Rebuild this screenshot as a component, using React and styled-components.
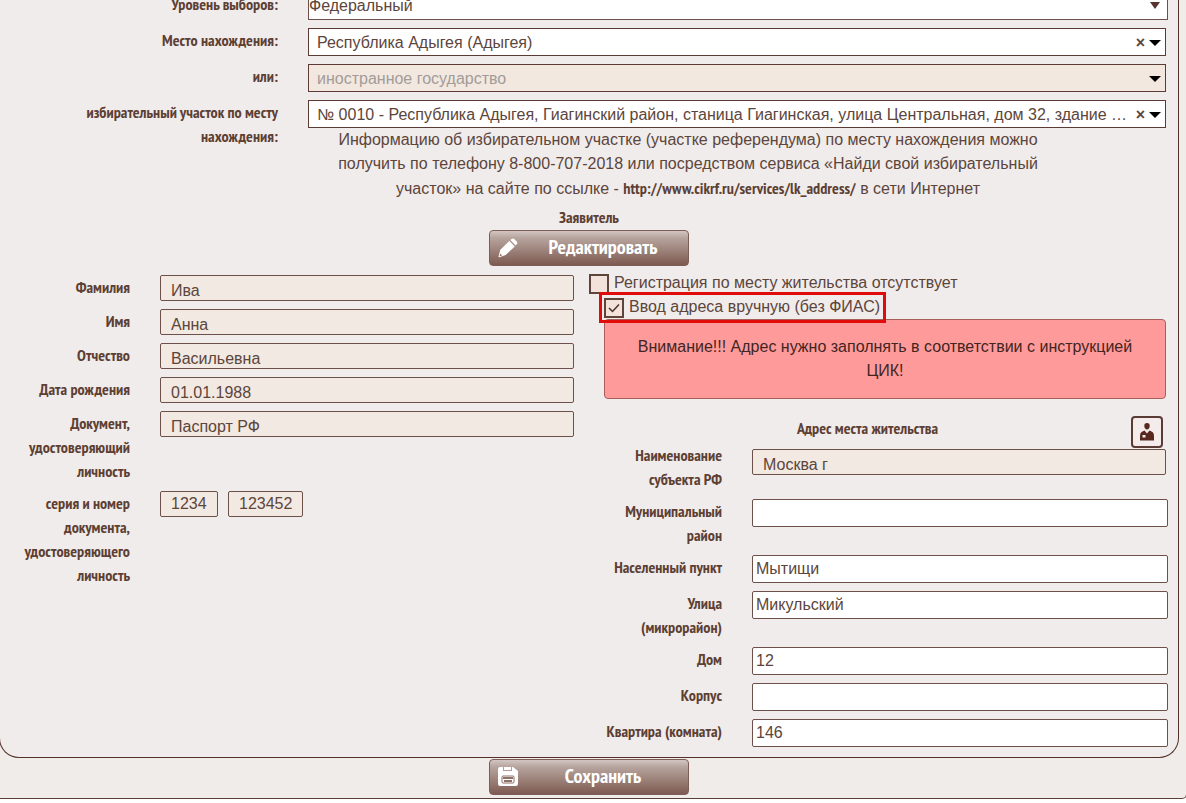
import React, { useState } from 'react';
import styled, { createGlobalStyle } from 'styled-components';

const narrow = '"PT Sans Narrow", "Liberation Sans Narrow", "Noto Sans", sans-serif';

const GlobalStyle = createGlobalStyle`
    * {
        box-sizing: border-box;
    }

    body {
        margin: 0;
        background: #fff;
        color: #5c453b;
        font: 16px/24px "Liberation Sans", Arial, sans-serif;
        overflow-x: hidden;
    }

    input, select, button {
        font: inherit;
        color: inherit;
    }
`;

const Sheet = styled.main`
    margin: -10px -1px 0 -1px;
    padding: 0 7px 3px 0;
    background: #f0ece9;
    border: 1px solid #5c3f37;
    border-radius: 0 0 5px 0;
    border-left: none;
`;

const Panel = styled.section`
    padding: 1px 10px 10px 0;
    background: #f0eceb;
    border: 1px solid #552f28;
    border-top: none;
    border-radius: 0 0 20px 20px;
`;

const Rows = styled.div`
    display: flex;
    flex-direction: column;
    gap: 8px;
`;

const Row = styled.div`
    display: grid;
    grid-template-columns: ${(props) => props.$label}px minmax(0, 1fr);
    column-gap: 30px;
    align-items: start;
`;

const Label = styled.label`
    font: bold 16px/24px ${narrow};
    color: #5d3f33;
    text-align: right;
`;

const NativeSelect = styled.select`
    display: block;
    width: 100%;
    height: 28px;
    padding: 0;
    border: 1px solid #6d5049;
    border-radius: 0;
    background: #fff;
    appearance: none;
`;

const SelectWrap = styled.div`
    position: relative;

    svg {
        position: absolute;
        right: 8px;
        top: 10px;
        pointer-events: none;
    }
`;

const Combo = styled.div`
    display: flex;
    align-items: center;
    height: 28px;
    margin-right: 2px;
    padding: 2px 4px 0 8px;
    border: 1px solid #5b3b34;
    background: ${(props) => (props.$off ? '#f2e8e0' : '#fff')};
    color: ${(props) => (props.$off ? '#a39c98' : 'inherit')};

    select {
        flex: 1;
        min-width: 0;
        padding: 0;
        border: none;
        background: none;
        opacity: 1;
        appearance: none;
        overflow: hidden;
        text-overflow: ellipsis;
        white-space: nowrap;
    }
`;

const Clear = styled.button`
    width: 17px;
    padding: 0;
    border: none;
    background: none;
    font-weight: bold;
    line-height: 24px;
    cursor: pointer;
`;

const Info = styled.p`
    margin: 0 100px 0 0;
    padding: 0 20px;
    text-align: center;

    a {
        font: bold 16px/24px ${narrow};
        color: #5d3f33;
        text-decoration: none;
    }
`;

const Heading = styled.h2`
    flex: 1;
    margin: 0;
    font: bold 16px/24px ${narrow};
    color: #5d3f33;
    text-align: center;
`;

const Applicant = styled.div`
    display: flex;
    flex-direction: column;
    align-items: center;
    gap: 1px;
    padding: 4px 0 5px 10px;
`;

const BigButton = styled.button`
    display: flex;
    align-items: center;
    width: 200px;
    height: 36px;
    padding: 0 0 0 8px;
    border: 1px solid #7d5e57;
    border-radius: 4px;
    background: linear-gradient(#d3c6c2 0, #b7a49e 20%, #a58e86 45%, #7e5a51 100%);
    color: #fff;
    font: bold 20px/24px ${narrow};
    cursor: pointer;

    span {
        flex: 1;
        padding-bottom: 2px;
    }
`;

const SaveBar = styled.footer`
    display: flex;
    justify-content: center;
    padding-top: 1px;
`;

const Columns = styled.div`
    display: grid;
    grid-template-columns: minmax(0, 574fr) minmax(0, 579fr);
    column-gap: 15px;
`;

const Person = styled(Rows)`
    padding-top: 4px;
`;

const Input = styled.input`
    display: block;
    width: 100%;
    height: 28px;
    padding: 0 3px;
    border: 1px solid #6d504a;
    border-radius: 2px;
    background: #fff;
    outline: none;
`;

const Locked = styled(Input).attrs({ readOnly: true })`
    height: 26px;
    padding: 5px 10px 0;
    line-height: 18px;
    background: #f2e9e2;
`;

const NumberBox = styled(Locked)`
    width: ${(props) => props.$size}px;
    padding-top: 0;
`;

const Region = styled(Locked)`
    width: calc(100% - 2px);
    margin-top: 6px;
`;

const Numbers = styled.div`
    display: flex;
    gap: 10px;
`;

const Address = styled(Rows)`
    padding-left: 15px;
`;

const Check = styled.label`
    position: relative;
    display: flex;
    align-items: center;
    gap: 5px;
    width: fit-content;
    margin-left: ${(props) => (props.$nested ? 15 : 0)}px;

    input {
        width: 20px;
        height: 20px;
        margin: 2px 0 0;
        border: 2px solid #5f443c;
        background: #f2e2da;
        appearance: none;
    }

    svg {
        position: absolute;
        left: 3px;
        top: 6px;
        pointer-events: none;
    }
`;

const Marked = styled(Check)`
    z-index: 1;

    &::after {
        content: "";
        position: absolute;
        inset: -3px -6px -4px -5px;
        border: 3px solid #e00c0c;
        pointer-events: none;
    }
`;

const Warning = styled.div`
    margin: 0 2px 17px 15px;
    padding: 15px 30px;
    border: 1px solid #a85f5c;
    border-radius: 4px;
    background: #ff9a9a;
    color: #43251f;
    text-align: center;
`;

const AddressHead = styled.div`
    display: flex;
    align-items: flex-start;
    height: 27px;
    padding: 0 5px 0 15px;
`;

const CardButton = styled.button`
    display: flex;
    align-items: center;
    justify-content: center;
    width: 32px;
    height: 32px;
    padding: 0;
    border: 2px solid #5b3b36;
    border-radius: 4px;
    background: #f3ecea;
    cursor: pointer;
`;

const Arrow = ({ small }) => (
    <svg width={small ? 10 : 12} height={small ? 7 : 6} viewBox="0 0 12 6" preserveAspectRatio="none">
        <path d="M0 0h12L6 6z" fill={small ? '#57342c' : '#000'} />
    </svg>
);

const Pencil = () => (
    <svg width="20" height="20" viewBox="0 0 20 20" fill="#fff">
        <path d="M12.4 1.9l1.1-1q1.4-1 2.8.2l2.4 2.5q1.2 1.4 0 2.7l-1.1 1.1z" />
        <path d="M11.3 2.9l5.5 5.6L7.6 17.1 1.4 19.2q-1 .2-.8-.9L2.3 11.7zM2.4 15.6l-.9 2.7 2.7-.9z" fillRule="evenodd" />
    </svg>
);

const Floppy = () => (
    <svg width="20" height="20" viewBox="0 0 20 20">
        <path d="M2 0h3v4h9V0l1 0 5 4v13q0 2-2 2H2q-2 0-2-2V2q0-2 2-2z" fill="#fff" />
        <path d="M6 0h7v3H6z" fill="#fff" />
        <rect x="4" y="9" width="12" height="7" rx="1" fill="none" stroke="#8f7168" />
        <path d="M5 11h10M6 14h8" stroke="#8f7168" strokeWidth="2" />
    </svg>
);

const Passport = () => (
    <svg width="14" height="18" viewBox="0 0 14 18" fill="#57291e">
        <path d="M7 0c2 0 2.8 1.300 2.700 3C9.600 5 8.500 6.500 7 6.500S4.400 5 4.300 3C4.200 1.300 5 0 7 0z" />
        <path fillRule="evenodd" d="M4.500 7.500L7 10.500l2.500-3 3 1.500Q14 10 14 13v4.500H0V13Q0 10 1.500 9zM2.500 12v2.500H5.500V12z" />
    </svg>
);

const Tick = () => (
    <svg width="14" height="14" viewBox="0 0 14 14" fill="none" stroke="#4a3029" strokeWidth="1.5">
        <path d="M2 7l3.5 3.5L12 3.5" />
    </svg>
);

const person = [
    { id: 'surname', label: 'Фамилия', value: 'Ива' },
    { id: 'name', label: 'Имя', value: 'Анна' },
    { id: 'patronymic', label: 'Отчество', value: 'Васильевна' },
    { id: 'birthday', label: 'Дата рождения', value: '01.01.1988' },
    { id: 'document', label: 'Документ, удостоверяющий личность', value: 'Паспорт РФ' },
];

const address = [
    { id: 'district', label: 'Муниципальный район', value: '' },
    { id: 'town', label: 'Населенный пункт', value: 'Мытищи' },
    { id: 'street', label: 'Улица (микрорайон)', value: 'Микульский' },
    { id: 'house', label: 'Дом', value: '12' },
    { id: 'building', label: 'Корпус', value: '' },
    { id: 'flat', label: 'Квартира (комната)', value: '146' },
];

const ComboBox = ({ id, text, off }) => (
    <Combo $off={off}>
        <select id={id}>
            <option>{text}</option>
        </select>
        {!off && <Clear type="button" aria-label="Очистить">×</Clear>}
        <Arrow />
    </Combo>
);

const App = () => {

    const [noRegistration, setNoRegistration] = useState(false);
    const [manual, setManual] = useState(true);

    return (
        <>
            <GlobalStyle />
            <Sheet>
                <Panel>
                    <Rows>
                        <Row $label={278}>
                            <Label htmlFor="level">Уровень выборов:</Label>
                            <SelectWrap>
                                <NativeSelect id="level">
                                    <option>Федеральный</option>
                                </NativeSelect>
                                <Arrow small />
                            </SelectWrap>
                        </Row>
                        <Row $label={278}>
                            <Label htmlFor="place">Место нахождения:</Label>
                            <ComboBox id="place" text="Республика Адыгея (Адыгея)" />
                        </Row>
                        <Row $label={278}>
                            <Label htmlFor="country">или:</Label>
                            <ComboBox id="country" text="иностранное государство" off />
                        </Row>
                        <Row $label={278}>
                            <Label htmlFor="station">избирательный участок по месту<br />нахождения:</Label>
                            <div>
                                <ComboBox
                                    id="station"
                                    text="№ 0010 - Республика Адыгея, Гиагинский район, станица Гиагинская, улица Центральная, дом 32, здание школы"
                                />
                                <Info>
                                    Информацию об избирательном участке (участке референдума) по месту нахождения можно
                                    получить по телефону 8-800-707-2018 или посредством сервиса «Найди свой избирательный
                                    участок» на сайте по ссылке - <a href="http://www.cikrf.ru/services/lk_address/">http://www.cikrf.ru/services/lk_address/</a> в сети Интернет
                                </Info>
                            </div>
                        </Row>
                    </Rows>
                    <Applicant>
                        <Heading>Заявитель</Heading>
                        <BigButton type="button">
                            <Pencil />
                            <span>Редактировать</span>
                        </BigButton>
                    </Applicant>
                    <Columns>
                        <Person>
                            {person.map((item) => (
                                <Row $label={130} key={item.id}>
                                    <Label htmlFor={item.id}>{item.label}</Label>
                                    <Locked id={item.id} defaultValue={item.value} />
                                </Row>
                            ))}
                            <Row $label={130}>
                                <Label htmlFor="series">серия и номер документа, удостоверяющего личность</Label>
                                <Numbers>
                                    <NumberBox id="series" $size={58} defaultValue="1234" />
                                    <NumberBox $size={75} defaultValue="123452" aria-label="Номер документа" />
                                </Numbers>
                            </Row>
                        </Person>
                        <div>
                            <Check>
                                <input
                                    type="checkbox"
                                    checked={noRegistration}
                                    onChange={() => setNoRegistration(!noRegistration)}
                                />
                                {noRegistration && <Tick />}
                                Регистрация по месту жительства отсутствует
                            </Check>
                            <Marked $nested>
                                <input type="checkbox" checked={manual} onChange={() => setManual(!manual)} />
                                {manual && <Tick />}
                                Ввод адреса вручную (без ФИАС)
                            </Marked>
                            <Warning>Внимание!!! Адрес нужно заполнять в соответствии с инструкцией ЦИК!</Warning>
                            <AddressHead>
                                <Heading>Адрес места жительства</Heading>
                                <CardButton type="button" aria-label="Паспортные данные">
                                    <Passport />
                                </CardButton>
                            </AddressHead>
                            <Address>
                                <Row $label={118}>
                                    <Label htmlFor="region">Наименование субъекта РФ</Label>
                                    <Region id="region" defaultValue="Москва г" />
                                </Row>
                                {address.map((item) => (
                                    <Row $label={118} key={item.id}>
                                        <Label htmlFor={item.id}>{item.label}</Label>
                                        <Input id={item.id} defaultValue={item.value} />
                                    </Row>
                                ))}
                            </Address>
                        </div>
                    </Columns>
                </Panel>
                <SaveBar>
                    <BigButton type="button">
                        <Floppy />
                        <span>Сохранить</span>
                    </BigButton>
                </SaveBar>
            </Sheet>
        </>
    )
}

export default App;
